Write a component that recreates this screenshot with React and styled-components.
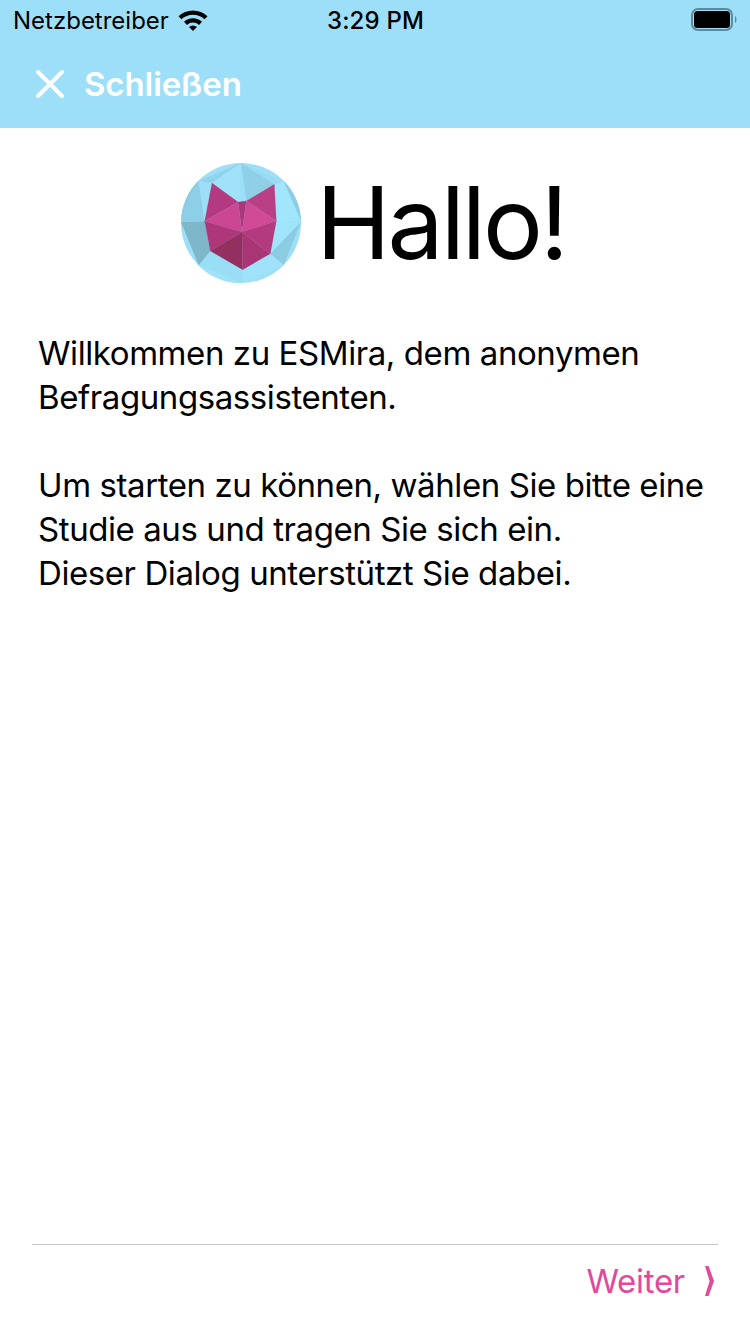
import React from 'react';
import styled, { createGlobalStyle } from 'styled-components';

const GlobalStyle = createGlobalStyle`
  html, body {
    margin: 0;
    padding: 0;
    background: #fff;
    font-family: Inter, "Liberation Sans", sans-serif;
  }
`;

const Page = styled.div`
  width: 750px;
  height: 1334px;
  display: flex;
  flex-direction: column;
  overflow: hidden;
  background: #fff;
`;

const Header = styled.header`
  height: 128px;
  background: #9ddff8;
  display: flex;
  flex-direction: column;
`;

const StatusBar = styled.div`
  height: 40px;
  padding: 0 12px 0 13px;
  display: grid;
  grid-template-columns: 1fr auto 1fr;
  align-items: center;
  color: #000;
  font-size: 24px;
`;

const Carrier = styled.div`
  display: flex;
  align-items: center;
  gap: 9px;
`;

const Clock = styled.div`
  font-weight: 500;
  letter-spacing: 0.15px;
`;

const Battery = styled.svg`
  justify-self: end;
  display: block;
`;

const NavBar = styled.div`
  flex: 1;
  display: flex;
  align-items: center;
  padding: 0 35px 0;
  gap: 19px;
  color: #fff;
`;

const NavTitle = styled.span`
  font-size: 33px;
  font-weight: 600;
  letter-spacing: -0.1px;
`;

const Content = styled.main`
  flex: 1;
  display: flex;
  flex-direction: column;
`;

const Hero = styled.div`
  display: flex;
  justify-content: center;
  align-items: center;
  gap: 15px;
  padding: 35px 3px 0 0;
`;

const Greeting = styled.h1`
  margin: 0;
  font-size: 100px;
  line-height: 120px;
  font-weight: 400;
  color: #000;
  letter-spacing: -3px;
`;

const Intro = styled.div`
  padding: 48px 38px 0;
  font-size: 33px;
  line-height: 44px;
  color: #000;
  letter-spacing: -0.42px;
`;

const Paragraph = styled.p`
  margin: 0 0 44px;
`;

const Footer = styled.footer`
  margin: 0 32px;
  height: 71px;
  padding-bottom: 18px;
  border-top: 1px solid #c6c6c8;
  display: flex;
  justify-content: flex-end;
  align-items: center;
`;

const NextButton = styled.button`
  border: 0;
  background: none;
  padding: 0 4px 0 0;
  display: flex;
  align-items: center;
  gap: 20px;
  font: inherit;
  font-size: 33px;
  letter-spacing: -0.3px;
  color: #e2499b;
`;

const WifiIcon = () => (
  <svg width="30" height="22" viewBox="0 0 30 22" aria-hidden="true">
    <path d="M0.5 7.2 A21 21 0 0 1 29.5 7.2 L26.6 10.3 A17 17 0 0 0 3.4 10.3 Z" fill="#000" />
    <path d="M6 12.8 A13.2 13.2 0 0 1 24 12.8 L21 15.9 A9 9 0 0 0 9 15.9 Z" fill="#000" />
    <path d="M11 18 A6 6 0 0 1 19 18 L15 22 Z" fill="#000" />
  </svg>
);

const CloseIcon = () => (
  <svg width="30" height="30" viewBox="0 0 30 30" aria-hidden="true">
    <path d="M3 3 L27 27 M27 3 L3 27" stroke="#fff" strokeWidth="4" strokeLinecap="round" />
  </svg>
);

const BatteryIcon = () => (
  <Battery width="48" height="24" viewBox="0 0 48 24" aria-hidden="true">
    <rect x="2" y="1" width="40" height="21" rx="6" fill="none" stroke="#5f8a9c" strokeWidth="2" />
    <rect x="4" y="3" width="36" height="17" rx="3.5" fill="#000" />
    <path d="M45 8 C47 9 47 14 45 15 Z" fill="#5f8a9c" />
  </Battery>
);

const ChevronIcon = () => (
  <svg width="9" height="30" viewBox="0 0 9 30" aria-hidden="true">
    <path d="M0 0 L3.6 0 L9 15 L3.6 30 L0 30 L4.6 15 Z" fill="#e2499b" />
  </svg>
);

// facets traced from the round fox logo
const discFacets = [
  ['#8fd4ec', '85,92 212,38 125,98'],
  ['#9fe2fa', '125,98 212,38 205,155'],
  ['#8fd0e6', '212,38 228,152 312,102'],
  ['#99dbf3', '212,38 340,92 312,102'],
  ['#a2e6fe', '340,92 392,212 318,212 312,102'],
  ['#8ccde2', '340,92 400,92 400,212 392,212'],
  ['#a0e4fc', '318,212 392,215 300,310'],
  ['#8bcce2', '392,215 340,345 300,310'],
  ['#9fe2fa', '300,310 340,345 217,398 217,358'],
  ['#9adef6', '120,302 85,345 217,398 217,358'],
  ['#a0e2f8', '85,345 20,345 20,398 217,398'],
  ['#7db7c9', '32,215 85,345 120,302 103,213'],
  ['#8dcfe6', '85,92 32,215 103,213'],
  ['#9ddff6', '85,92 125,98 103,213'],
  ['#8ccde2', '85,92 20,92 20,215 32,215'],
];

const foxFacets = [
  ['#b33a80', '125,98 203,155 103,213'],
  ['#a8387a', '203,155 228,152 215,245'],
  ['#bb3f85', '312,102 228,152 318,212'],
  ['#cc4793', '103,213 203,155 215,245'],
  ['#d04a96', '228,152 318,212 215,245'],
  ['#ae3779', '103,213 215,245 120,302'],
  ['#93305f', '120,302 215,245 217,358'],
  ['#a93574', '215,245 300,310 217,358'],
  ['#b33a7d', '215,245 318,212 300,310'],
];

const Logo = () => (
  <svg width="120" height="120" viewBox="32 38 360 360" aria-hidden="true">
    <defs>
      <clipPath id="disc">
        <circle cx="212" cy="218" r="180" />
      </clipPath>
    </defs>
    <g clipPath="url(#disc)">
      <rect x="32" y="38" width="360" height="360" fill="#9ddff6" />
      {discFacets.map(([fill, points]) => (
        <polygon key={points} fill={fill} points={points} />
      ))}
    </g>
    {foxFacets.map(([fill, points]) => (
      <polygon key={points} fill={fill} points={points} stroke={fill} strokeWidth="0.5" />
    ))}
  </svg>
);

export default function App() {
  return (
    <Page>
      <GlobalStyle />
      <Header>
        <StatusBar>
          <Carrier>
            Netzbetreiber
            <WifiIcon />
          </Carrier>
          <Clock>3:29 PM</Clock>
          <BatteryIcon />
        </StatusBar>
        <NavBar>
          <CloseIcon />
          <NavTitle>Schließen</NavTitle>
        </NavBar>
      </Header>
      <Content>
        <Hero>
          <Logo />
          <Greeting>Hallo!</Greeting>
        </Hero>
        <Intro>
          <Paragraph>
            Willkommen zu ESMira, dem anonymen
            <br />
            Befragungsassistenten.
          </Paragraph>
          <Paragraph>
            Um starten zu können, wählen Sie bitte eine
            <br />
            Studie aus und tragen Sie sich ein.
            <br />
            Dieser Dialog unterstützt Sie dabei.
          </Paragraph>
        </Intro>
      </Content>
      <Footer>
        <NextButton>
          Weiter
          <ChevronIcon />
        </NextButton>
      </Footer>
    </Page>
  );
}
